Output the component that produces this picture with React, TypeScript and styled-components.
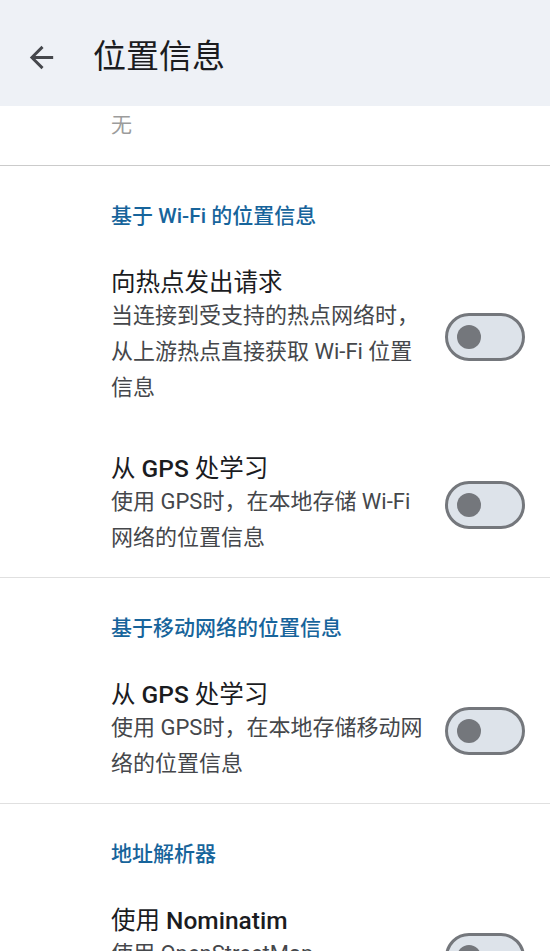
import React from "react";
import styled, { createGlobalStyle } from "styled-components";

const Global = createGlobalStyle`
  html, body {
    margin: 0;
    padding: 0;
    background: #ffffff;
    width: 550px;
    height: 951px;
    overflow: hidden;
  }
  * { box-sizing: border-box; }
  body {
    font-family: Roboto, "Noto Sans CJK SC", sans-serif;
    -webkit-font-smoothing: antialiased;
  }
`;

const Page = styled.div`
  width: 550px;
  height: 951px;
  overflow: hidden;
  display: flex;
  flex-direction: column;
`;

const TopBar = styled.header`
  height: 106px;
  flex: none;
  background: #eef1f6;
  display: flex;
  align-items: center;
  padding: 8px 0 0 23px;
  gap: 34px;
`;

const BackButton = styled.button`
  width: 36px;
  height: 36px;
  border: none;
  background: transparent;
  padding: 0;
  display: flex;
  align-items: center;
  justify-content: center;
  color: #45474c;
`;

const Title = styled.h1`
  margin: 0;
  font-size: 33px;
  font-weight: 400;
  color: #1b1c1f;
  line-height: 40px;
`;

const Scroll = styled.main`
  flex: 1;
  overflow: hidden;
  display: flex;
  flex-direction: column;
`;

const PartialItem = styled.div`
  padding: 1px 24px 22px 111px;
  font-size: 21px;
  line-height: 36px;
  color: #9c9c9c;
`;

const Divider = styled.hr<{ $strong?: boolean }>`
  margin: 0;
  border: none;
  height: 1px;
  flex: none;
  background: ${(p) => (p.$strong ? "#cbcbcb" : "#e0e0e0")};
`;

const Category = styled.div`
  padding: 36px 24px 11px 111px;
  font-size: 21px;
  line-height: 28px;
  font-weight: 500;
  color: #17649b;
`;

const Row = styled.div`
  display: flex;
  align-items: center;
  padding: 27px 25px 21px 111px;
  gap: 20px;
`;

const Texts = styled.div`
  flex: 1;
  min-width: 0;
  display: flex;
  flex-direction: column;
`;

const RowTitle = styled.div`
  font-size: 24.5px;
  line-height: 30px;
  font-weight: 400;
  color: #1b1c1f;
`;

const Latin = styled.span`
  font-weight: 500;
`;

const Summary = styled.div`
  font-size: 22px;
  line-height: 36px;
  color: #45474b;
`;

const SwitchTrack = styled.div`
  flex: none;
  width: 80px;
  height: 48px;
  border: 3px solid #74777c;
  border-radius: 24px;
  background: #dde3ea;
  display: flex;
  align-items: center;
  padding-left: 9px;
`;

const SwitchThumb = styled.div`
  width: 24px;
  height: 24px;
  border-radius: 50%;
  background: #74777c;
`;

const Switch = () => (
  <SwitchTrack role="switch" aria-checked={false}>
    <SwitchThumb />
  </SwitchTrack>
);

const ArrowBack = () => (
  <svg width="35" height="35" viewBox="0 0 24 24" fill="currentColor">
    <path d="M20 11H7.83l5.59-5.59L12 4l-8 8 8 8 1.41-1.41L7.83 13H20v-2z" />
  </svg>
);

type Pref = { title: React.ReactNode; summary: React.ReactNode };

const PrefRow = ({ title, summary }: Pref) => (
  <Row>
    <Texts>
      <RowTitle>{title}</RowTitle>
      <Summary>{summary}</Summary>
    </Texts>
    <Switch />
  </Row>
);

export default function App() {
  return (
    <Page>
      <Global />
      <TopBar>
        <BackButton aria-label="返回">
          <ArrowBack />
        </BackButton>
        <Title>位置信息</Title>
      </TopBar>
      <Scroll>
        <PartialItem>无</PartialItem>
        <Divider $strong />
        <Category>
          基于 <Latin>Wi-Fi</Latin> 的位置信息
        </Category>
        <PrefRow
          title="向热点发出请求"
          summary="当连接到受支持的热点网络时，从上游热点直接获取 Wi-Fi 位置信息"
        />
        <PrefRow
          title={
            <>
              从 <Latin>GPS</Latin> 处学习
            </>
          }
          summary="使用 GPS时，在本地存储 Wi-Fi 网络的位置信息"
        />
        <Divider />
        <Category>基于移动网络的位置信息</Category>
        <PrefRow
          title={
            <>
              从 <Latin>GPS</Latin> 处学习
            </>
          }
          summary="使用 GPS时，在本地存储移动网络的位置信息"
        />
        <Divider />
        <Category>地址解析器</Category>
        <PrefRow
          title={
            <>
              使用 <Latin>Nominatim</Latin>
            </>
          }
          summary={
            <>
              使用 OpenStreetMap
              <br />
              Nominatim 服务解析地址
            </>
          }
        />
      </Scroll>
    </Page>
  );
}
